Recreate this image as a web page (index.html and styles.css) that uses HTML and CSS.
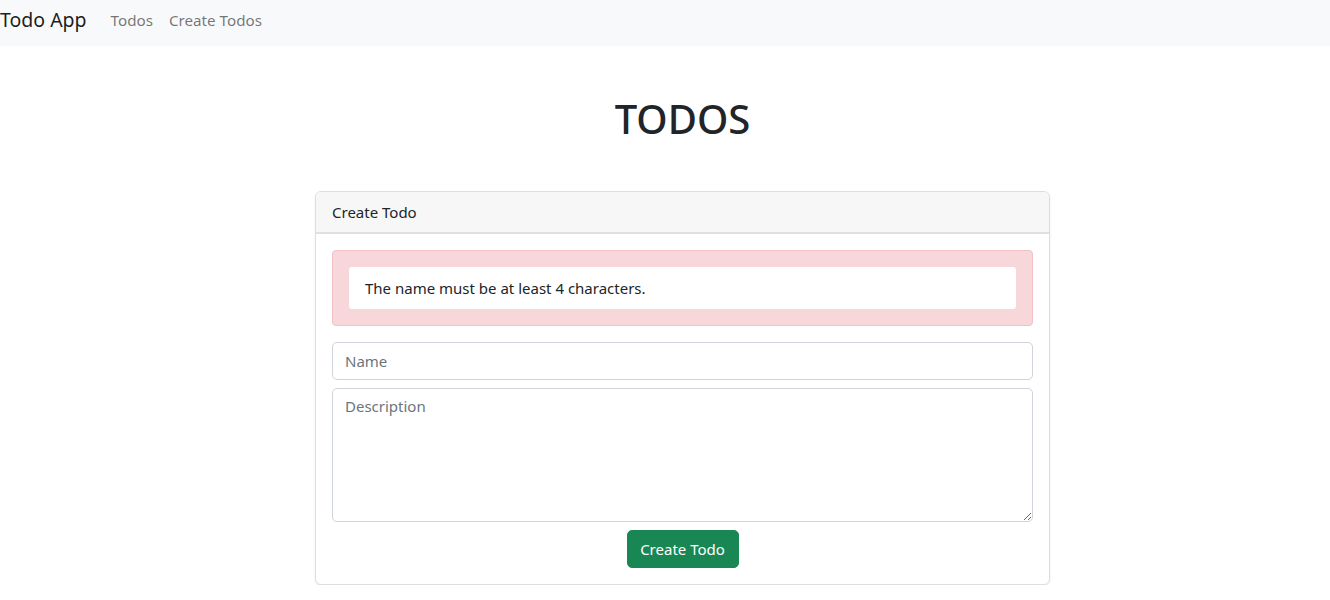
FILE: index.html
```html
<!DOCTYPE html>
<html lang="en">
<head>
<meta charset="utf-8">
<title>Todo App</title>
<link rel="stylesheet" href="styles.css">
</head>
<body>
<nav class="navbar">
  <a class="brand" href="#">Todo App</a>
  <ul class="nav-links">
    <li><a href="#">Todos</a></li>
    <li><a href="#">Create Todos</a></li>
  </ul>
</nav>
<main class="page">
  <h1 class="title">TODOS</h1>
  <div class="card">
    <div class="card-header">Create Todo</div>
    <div class="card-body">
      <div class="alert">
        <ul class="errors">
          <li>The name must be at least 4 characters.</li>
        </ul>
      </div>
      <form class="form">
        <input class="control" type="text" placeholder="Name">
        <textarea class="control area" placeholder="Description"></textarea>
        <div class="actions">
          <button class="btn" type="button">Create Todo</button>
        </div>
      </form>
    </div>
  </div>
</main>
</body>
</html>
```

FILE: styles.css
```css
* { box-sizing: border-box; }
html, body { margin: 0; padding: 0; }
body {
  font-family: "Segoe UI", "Noto Sans", "Open Sans", sans-serif;
  font-size: 16px;
  line-height: 1.5;
  color: #212529;
  background: #fff;
}
.navbar {
  height: 46px;
  background: #f8f9fa;
  display: flex;
  align-items: center;
}
.brand {
  font-size: 19.5px;
  color: rgba(0,0,0,.9);
  text-decoration: none;
  margin-right: 16px;
  line-height: 30px;
  padding-bottom: 6px;
}
.nav-links {
  list-style: none;
  margin: 0;
  padding: 0 0 6px 0;
  display: flex;
}
.nav-links a {
  display: block;
  padding: 0 8px;
  font-size: 15.2px;
  color: rgba(0,0,0,.55);
  text-decoration: none;
}
.page {
  padding-left: 35px;
  display: flex;
  flex-direction: column;
  align-items: center;
}
.title {
  font-size: 40px;
  font-weight: 500;
  line-height: 1.2;
  margin: 49px 0 48px 0;
}
.card {
  width: 735px;
  border: 1px solid rgba(0,0,0,.13);
  border-radius: 6px;
  box-shadow: 0 1px 2px rgba(0,0,0,.1);
}
.card-header {
  background: #f7f7f7;
  border-bottom: 2px solid #e0e0e0;
  padding: 8px 16px;
  font-size: 15px;
  height: 42px;
  line-height: 24px;
  border-radius: 6px 6px 0 0;
}
.card-body {
  padding: 16px;
}
.alert {
  background: #f8d7da;
  border: 1px solid #f1c1c6;
  border-radius: 4px;
  padding: 16px;
  margin-bottom: 16px;
}
.errors {
  list-style: none;
  margin: 0;
  padding: 0;
}
.errors li {
  background: #fff;
  border-radius: 3px;
  padding: 9px 16px;
  font-size: 15px;
  line-height: 24px;
}
.form {
  display: flex;
  flex-direction: column;
  gap: 8px;
}
.control {
  display: block;
  width: 100%;
  height: 38px;
  padding: 6px 12px;
  font: inherit;
  font-size: 15px;
  color: #212529;
  border: 1px solid #ced4da;
  border-radius: 5px;
  background: #fff;
}
.control::placeholder { color: #6c757d; }
.area {
  height: 134px;
  resize: vertical;
}
.actions {
  display: flex;
  justify-content: center;
}
.btn {
  font: inherit;
  font-size: 15px;
  height: 38px;
  padding: 6px 12px;
  color: #fff;
  background: #198754;
  border: 1px solid #198754;
  border-radius: 5px;
  width: 112px;
}
```
